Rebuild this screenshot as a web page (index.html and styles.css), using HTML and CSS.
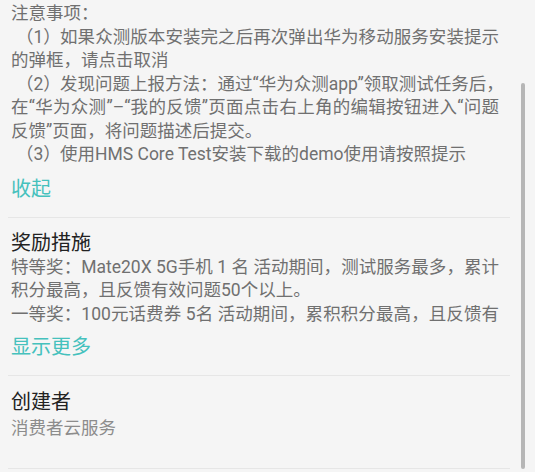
FILE: index.html
```html
<!DOCTYPE html>
<html lang="zh-CN">
<head>
  <meta charset="UTF-8">
  <title>活动详情</title>
  <meta name="viewport" content="width=device-width, initial-scale=1.0">
  <link rel="stylesheet" href="styles.css">
</head>
<body>

  <div class="page">

    <!-- 活动说明 -->
    <section class="block block-notes">
      <div class="text">
        <p>注意事项：</p>
        <p><span class="jl"><span class="num">（1）</span>如果众测版本安装完之后再次弹出华为移动服务安装提示</span>的弹框，请点击取消</p>
        <p><span class="jl"><span class="num">（2）</span>发现问题上报方法：通过“华为众测app”领取测试任务后，</span><span class="jl">在“华为众测”–“我的反馈”页面点击右上角的编辑按钮进入“问题</span>反馈”页面，将问题描述后提交。</p>
        <p><span class="num">（3）</span>使用HMS Core Test安装下载的demo使用请按照提示</p>
      </div>
      <a class="more-link">收起</a>
    </section>

    <!-- 奖励措施 -->
    <section class="block block-prize">
      <h2>奖励措施</h2>
      <div class="text">
        <p><span class="jl">特等奖：Mate20X 5G手机 1 名 活动期间，测试服务最多，累计</span>积分最高，且反馈有效问题50个以上。</p>
        <p><span class="jl">一等奖：100元话费券 5名 活动期间，累积积分最高，且反馈有</span></p>
      </div>
      <a class="more-link">显示更多</a>
    </section>

    <!-- 创建者 -->
    <section class="block block-owner">
      <h2>创建者</h2>
      <p class="owner">消费者云服务</p>
    </section>

  </div>

  <!-- Scrollbar -->
  <div class="scroll-thumb"></div>

</body>
</html>
```

FILE: styles.css
```css
/* Grundlayout */
body {
  margin: 0;
  padding: 0;
  background: #f5f5f5;
  font-family: Roboto, "Noto Sans CJK SC", sans-serif;
  overflow: hidden;
}
.page {
  width: 502px;
  padding-left: 8px;
}

.block {
  border-bottom: 1px solid #e6e6e6;
  padding-left: 3px;
}
.block-notes {
  padding-top: 2px;
  padding-bottom: 16px;
}
.block-prize {
  padding-top: 12px;
  padding-bottom: 16px;
}
.block-owner {
  padding-top: 13px;
  padding-bottom: 27px;
}

/* Fliesstext */
.text {
  width: 488px;
}
.text p {
  margin: 0;
  font-size: 17.5px;
  line-height: 23.5px;
  color: #707070;
}
/* umgebrochene Zeilen im Blocksatz */
.text .jl {
  display: block;
  white-space: nowrap;
  text-align: justify;
  text-align-last: justify;
}
/* Nummerierung (1) (2) (3) */
.num {
  display: inline-block;
  box-sizing: border-box;
  width: 49px;
  padding: 0 13px 0 5px;
  text-align: justify;
  text-align-last: justify;
}

h2 {
  margin: 0;
  font-size: 20px;
  line-height: 26px;
  font-weight: normal;
  color: #222;
}

.more-link {
  display: block;
  margin-top: 9px;
  font-size: 20px;
  line-height: 24px;
  color: #45c1bd;
}
.block-notes .more-link {
  margin-top: 10px;
}

.owner {
  margin: 0;
  font-size: 17.5px;
  line-height: 26px;
  color: #8c8c8c;
}

/* Scrollbalken */
.scroll-thumb {
  position: absolute;
  top: 83px; left: 521px;
  width: 4px; height: 386px;
  background: #b6b6b6;
  border-radius: 2px;
}
```
